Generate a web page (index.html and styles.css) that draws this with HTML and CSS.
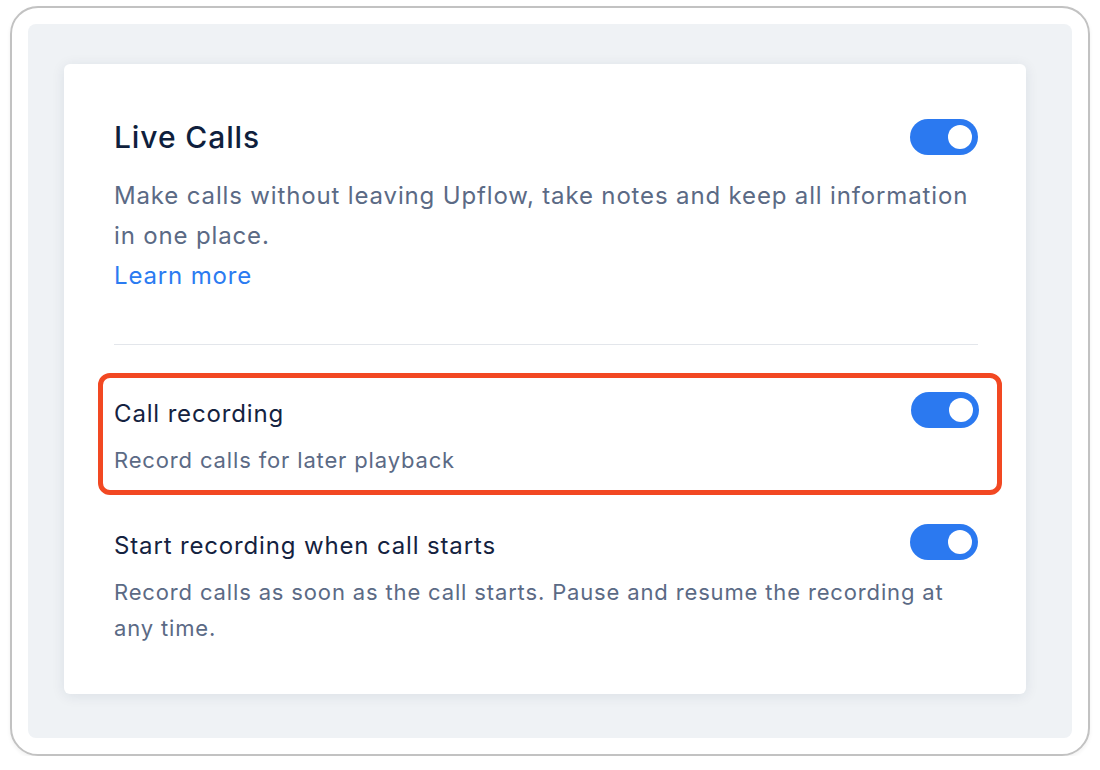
FILE: index.html
```html
<!DOCTYPE html>
<html lang="en">
<head>
    <meta charset="UTF-8">
    <title>Live Calls</title>
    <link rel="stylesheet" href="styles.css">
</head>
<body>
    <div class="frame">
        <div class="panel">
            <div class="card">
                <div class="header">
                    <h2>Live Calls</h2>
                    <span class="toggle on"><span class="knob"></span></span>
                </div>
                <p class="intro">
                    Make calls without leaving Upflow, take notes and keep all information in one place.<br>
                    <a href="#" class="link">Learn more</a>
                </p>
                <hr class="divider">
                <div class="setting highlight">
                    <div class="setting-head">
                        <div class="setting-title">Call recording</div>
                        <span class="toggle on"><span class="knob"></span></span>
                    </div>
                    <div class="setting-desc">Record calls for later playback</div>
                </div>
                <div class="setting">
                    <div class="setting-head">
                        <div class="setting-title">Start recording when call starts</div>
                        <span class="toggle on"><span class="knob"></span></span>
                    </div>
                    <div class="setting-desc">Record calls as soon as the call starts. Pause and resume the recording at any time.</div>
                </div>
            </div>
        </div>
    </div>
</body>
</html>
```

FILE: styles.css
```css
body {
    margin: 0;
    padding: 0;
    background: #fff;
    font-family: Inter, "Noto Sans", sans-serif;
}
.frame {
    box-sizing: border-box;
    width: 1080px;
    height: 750px;
    margin: 6px 0 0 10px;
    border: 2px solid #c2c2c2;
    border-radius: 28px;
    padding: 16px;
    display: flex;
    box-shadow: 0 2px 4px rgba(0, 0, 0, 0.06);
}
.panel {
    flex: 1;
    background: #eff2f5;
    border-radius: 8px;
    padding: 40px 46px 0 36px;
}
.card {
    background: #fff;
    border-radius: 6px;
    box-shadow: 0 2px 14px rgba(20, 40, 80, 0.09);
    padding: 55px 48px 48px 50px;
}
.header {
    display: flex;
    align-items: center;
    justify-content: space-between;
    height: 36px;
}
h2 {
    margin: 0;
    font-size: 30px;
    font-weight: 500;
    letter-spacing: 0.9px;
    line-height: 36px;
    color: #0f1f3d;
}
.intro {
    margin: 21px -2px 0 0;
    font-size: 24px;
    letter-spacing: 0.85px;
    line-height: 40px;
    color: #5b6a85;
}
.link {
    color: #2b7bf1;
    text-decoration: none;
}
.divider {
    border: none;
    border-top: 1px solid #e3e6eb;
    margin: 48px 0 0 0;
}
.setting {
    margin-top: 35px;
}
.setting.highlight {
    margin: 28px -24px 0 -16px;
    border: 5px solid #f24822;
    border-radius: 12px;
    padding: 20px 18px 12px 11px;
}
.setting-head {
    display: flex;
    justify-content: space-between;
    align-items: flex-start;
}
.setting-title {
    font-size: 24px;
    letter-spacing: 0.85px;
    line-height: 32px;
    color: #14223f;
}
.setting-desc {
    margin-top: 12px;
    font-size: 22px;
    letter-spacing: 0.85px;
    line-height: 36px;
    color: #5b6a85;
}
.toggle {
    flex-shrink: 0;
    box-sizing: border-box;
    width: 68px;
    height: 36px;
    border-radius: 18px;
    background: #cbd2dc;
    padding: 6px;
    display: flex;
}
.setting .toggle {
    margin-top: -6px;
}
.toggle.on {
    background: #2b79f0;
    justify-content: flex-end;
}
.knob {
    width: 24px;
    height: 24px;
    border-radius: 50%;
    background: #fff;
}
```
